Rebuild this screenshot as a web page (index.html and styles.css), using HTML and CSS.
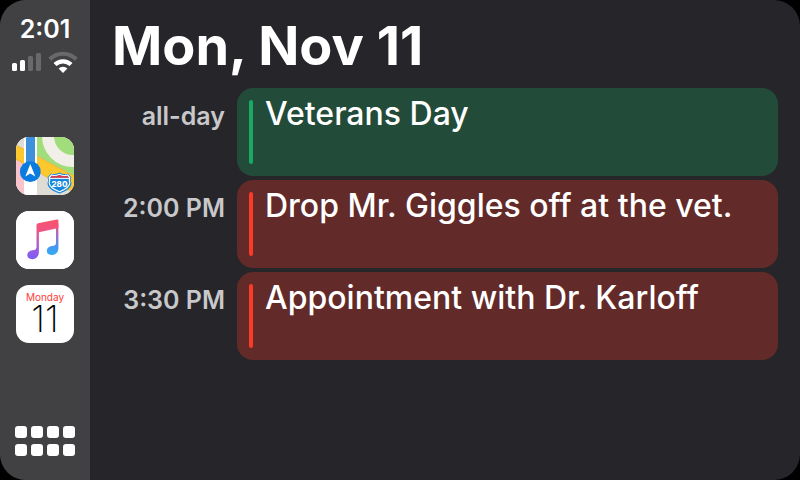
FILE: index.html
```
<!DOCTYPE html>
<html lang="en">
<head>
  <meta charset="UTF-8">
  <meta name="viewport" content="width=device-width, initial-scale=1.0">
  <title>Calendar</title>
  <link rel="stylesheet" href="styles.css">
</head>
<body>
  <div class="screen">
    <nav class="sidebar">
      <div class="clock">2:01</div>
      <div class="status">
        <svg width="30" height="22" viewBox="0 0 30 22" aria-label="Signal">
          <rect x="0" y="12" width="5" height="8" rx="1.5" fill="#fff"/>
          <rect x="8" y="9" width="5" height="11" rx="1.5" fill="#fff"/>
          <rect x="16" y="5" width="5" height="15" rx="1.5" fill="#69696b"/>
          <rect x="24" y="2" width="5" height="18" rx="1.5" fill="#69696b"/>
        </svg>
        <svg width="30" height="22" viewBox="0 0 30 22" aria-label="Wi-Fi">
          <path d="M1.8 8.2a18.7 18.7 0 0 1 26.4 0" fill="none" stroke="#69696b" stroke-width="4.2"/>
          <path d="M7 13.6a11.3 11.3 0 0 1 16 0" fill="none" stroke="#fff" stroke-width="4.2"/>
          <path d="M15 22l-4.4-4.4a6.3 6.3 0 0 1 8.8 0z" fill="#fff"/>
        </svg>
      </div>

      <div class="apps">
        <button class="app" aria-label="Maps">
          <svg viewBox="0 0 58 58">
            <rect width="58" height="58" fill="#dfdcd6"/>
            <path d="M20 0h38v41L20 18z" fill="#a1dd7b"/>
            <circle cx="57" cy="-1" r="25" fill="none" stroke="#f2efe9" stroke-width="12"/>
            <path d="M0 20l9 6v32H0z" fill="#f9c3cb"/>
            <path d="M-2 7l62 33v17L-2 21z" fill="#fdc72e" stroke="#f0b640" stroke-width="1"/>
            <path d="M8 0h13v58H8z" fill="#fff"/>
            <path d="M10 0h9v35h-9z" fill="#3d91dc"/>
            <circle cx="14.3" cy="34.7" r="10.4" fill="#0b7bdf"/>
            <path d="M14.3 27l5 12.500-5-3-5 3z" fill="#fff"/>
            <path d="M35 36.500q4 1.600 8.500-1 4.500 2.600 8.500 1l3.500 4q-1.500 2 0 5.500c0 5-5 8-12 10.500-7-2.500-12-5.500-12-10.500q1.500-3.500 0-5.500z" fill="#1687da"/>
            <path d="M35.500 38q4 1.300 8-.8 4 2.100 8 .8l2.300 2.700q-1 2 0 5c0 4-4 6.500-10.300 9-6.300-2.500-10.300-5-10.300-9q1-3 0-5z" fill="#1687da" stroke="#fff" stroke-width="1.200"/>
            <path d="M35.800 38.700q4 1.200 7.700-.8 3.700 2 7.700.8l1.500 2H34.300z" fill="#ed3340"/>
            <path d="M33.300 41.400h20.400" stroke="#fff" stroke-width="1"/>
            <text x="43.500" y="49.700" class="shield-text">280</text>
          </svg>
        </button>
        <button class="app" aria-label="Music">
          <svg viewBox="0 0 58 58">
            <defs>
              <linearGradient id="note" gradientUnits="userSpaceOnUse" x1="32" y1="9" x2="29" y2="49">
                <stop offset="0" stop-color="#f9536c"/>
                <stop offset="0.3" stop-color="#ec5487"/>
                <stop offset="0.6" stop-color="#b35cd0"/>
                <stop offset="1" stop-color="#7a5cf5"/>
              </linearGradient>
              <linearGradient id="note-right" gradientUnits="userSpaceOnUse" x1="41" y1="12" x2="38" y2="42">
                <stop offset="0" stop-color="#f9536c"/>
                <stop offset="0.4" stop-color="#a868cc"/>
                <stop offset="0.75" stop-color="#4d92ef"/>
                <stop offset="1" stop-color="#37a8f2"/>
              </linearGradient>
            </defs>
            <rect width="58" height="58" fill="#fff"/>
            <path d="M40 16l2.400-4v25c0 4-2.500 6.800-6.300 7-3.600.2-5.500-1.800-5.300-4.400.2-2.700 2.400-4 5-4.500 3-.5 4.200-.8 4.200-3z" fill="url(#note-right)"/>
            <path d="M22 12.200l19-3.700q1.400-.2 1.400 1.200V17l-19.500 4.200V41c0 4-2.600 7-6.300 7.200-3.600.2-5.500-1.800-5.300-4.500.2-2.600 2.300-4 5-4.500 3-.5 4.200-.8 4.200-3V14.200q0-1.700 1.500-2z" fill="url(#note)"/>
          </svg>
        </button>
        <button class="app calendar" aria-label="Calendar">
          <span class="calendar-day">Monday</span>
          <span class="calendar-date">11</span>
        </button>
      </div>

      <button class="home" aria-label="Home">
        <i></i><i></i><i></i><i></i>
        <i></i><i></i><i></i><i></i>
      </button>
    </nav>

    <main class="agenda">
      <h1>Mon, Nov 11</h1>
      <ul class="events">
        <li>
          <span class="when">all-day</span>
          <div class="event green">Veterans Day</div>
        </li>
        <li>
          <span class="when">2:00 PM</span>
          <div class="event red">Drop Mr. Giggles off at the vet.</div>
        </li>
        <li>
          <span class="when">3:30 PM</span>
          <div class="event red">Appointment with Dr. Karloff</div>
        </li>
      </ul>
    </main>
  </div>
</body>
</html>
```
FILE: styles.css
```
* {
  box-sizing: border-box;
}
body {
  margin: 0;
  background: #000;
  color: #fff;
  font-family: Inter, "Liberation Sans", sans-serif;
}
button {
  border: none;
  padding: 0;
  font-family: inherit;
  cursor: pointer;
}
.screen {
  display: flex;
  min-height: 100vh;
  border-radius: 26px;
  overflow: hidden;
  background: #25252a;
}
.sidebar {
  flex: 0 0 90px;
  display: flex;
  flex-direction: column;
  align-items: center;
  padding: 14px 0 24px;
  background: #414143;
}
.clock {
  font-size: 25px;
  line-height: 30px;
  font-weight: 600;
}
.status {
  display: flex;
  gap: 6px;
  margin-top: 7px;
}
.apps {
  display: flex;
  flex-direction: column;
  gap: 16px;
  margin-top: 64px;
}
.app {
  display: block;
  width: 58px;
  height: 58px;
  border-radius: 13px;
  overflow: hidden;
  background: #fff;
}
.app svg {
  display: block;
}
.shield-text {
  font-size: 8px;
  font-weight: 800;
  fill: #fff;
  text-anchor: middle;
}
.calendar {
  display: flex;
  flex-direction: column;
  align-items: center;
  padding-top: 6px;
}
.calendar-day {
  color: #fc3d39;
  font-size: 10px;
  line-height: 12px;
}
.calendar-date {
  color: #000;
  font-size: 36px;
  line-height: 32px;
  font-weight: 200;
}
.home {
  display: grid;
  grid-template-columns: repeat(4, 12px);
  gap: 6px 4px;
  margin-top: auto;
  background: none;
}
.home i {
  height: 12px;
  border-radius: 3px;
  background: #fff;
}
.agenda {
  flex: 1;
  min-width: 0;
  padding: 12px 22px 24px;
}
h1 {
  margin: 0;
  font-size: 54px;
  line-height: 68px;
  font-weight: 700;
}
.events {
  list-style: none;
  margin: 8px 0 0;
  padding: 0;
}
.events li {
  display: flex;
  gap: 12px;
  margin-bottom: 4px;
}
.when {
  flex: 0 0 113px;
  padding-top: 13px;
  color: #c8c8ca;
  font-size: 25px;
  line-height: 30px;
  font-weight: 600;
  text-align: right;
}
.event {
  flex: 1;
  display: flex;
  gap: 12px;
  min-height: 88px;
  padding: 12px;
  border-radius: 16px;
  font-size: 32px;
  line-height: 28px;
  font-weight: 500;
}
.event::before {
  content: "";
  flex: 0 0 4px;
  border-radius: 2px;
}
.green {
  background: #224b3a;
}
.green::before {
  background: #1aa965;
}
.red {
  background: #622a28;
}
.red::before {
  background: #fb3b26;
}
```
